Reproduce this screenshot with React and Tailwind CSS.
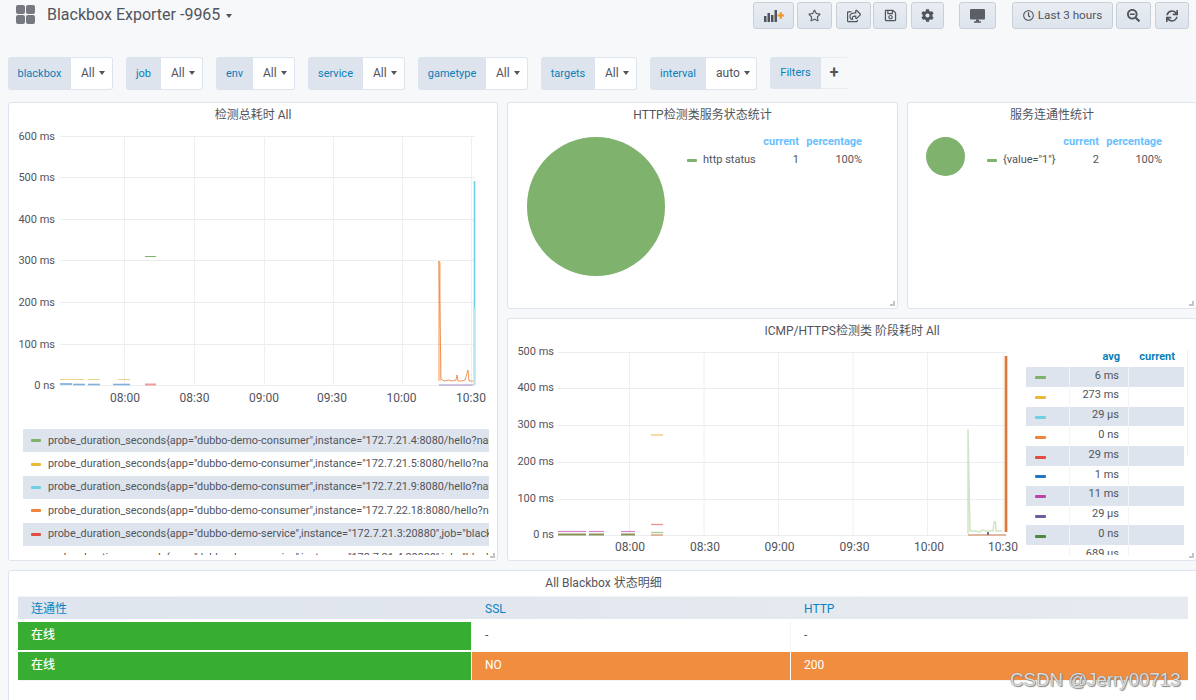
import React from "react";
import { FaRegStar, FaRegShareSquare, FaRegSave, FaCog, FaRegClock, FaSearchMinus, FaSync } from "react-icons/fa";

const Caret = ({ c = "" }) => (
  <span className={"inline-block w-0 h-0 border-x-[3.5px] border-t-[4px] border-x-transparent border-t-[#52545c] " + c} />
);

const btn = "h-[27px] flex items-center justify-center rounded-[3px] border border-[#c7d0d9] bg-gradient-to-b from-[#e9edf2] to-[#dde4ed] text-[#52545c]";

const vars = [
  ["blackbox", "All", "w-[63px]", "w-[42px]"],
  ["job", "All", "w-[35px]", "w-[42px]"],
  ["env", "All", "w-[37px]", "w-[42px]"],
  ["service", "All", "w-[55px]", "w-[42px]"],
  ["gametype", "All", "w-[68px]", "w-[42px]"],
  ["targets", "All", "w-[54px]", "w-[42px]"],
  ["interval", "auto", "w-[56px]", "w-[51px]"],
];

function Panel({ className = "", title, children, handle = true }) {
  return (
    <div className={"relative overflow-hidden bg-white border border-[#dde4ed] rounded-[3px] shrink-0 " + className}>
      <div className="h-[22px] pt-[2px] flex items-center justify-center text-[12px] font-normal text-[#52545c] whitespace-nowrap">{title}</div>
      {children}
      {handle && <span className="absolute right-[2px] bottom-[2px] w-[5px] h-[5px] border-r-2 border-b-2 border-[#c4c4c4]" />}
    </div>
  );
}

function Grid({ ys, xs, x0, x1, y0, y1, labels, times, tx, ty, lx, ly }) {
  return (
    <g>
      {ys.map((y) => <line key={y} x1={x0} x2={x1} y1={y} y2={y} stroke="#ecedef" strokeWidth="1" />)}
      {xs.map((x) => <line key={x} x1={x} x2={x} y1={y0} y2={y1} stroke="#eff0f2" strokeWidth="1" />)}
      {ys.map((y, i) => (
        <text key={y} x={lx} y={y + ly} textAnchor="end" fontSize="11" fill="#52545c">{labels[i]}</text>
      ))}
      {xs.map((x, i) => (
        <text key={x} x={tx[i]} y={ty} textAnchor="middle" fontSize="12" fill="#52545c">{times[i]}</text>
      ))}
    </g>
  );
}

const Seg = ({ x1, x2, y, c, w = 1, o = 1 }) => <line x1={x1} x2={x2} y1={y} y2={y} stroke={c} strokeWidth={w} opacity={o} />;

function Chart1() {
  const ys = [136.5, 177.5, 219.5, 260.5, 302.5, 344.5, 385.5];
  const xs = [124.5, 194.5, 264.5, 333.5, 402.5, 471.5];
  return (
    <svg width="488" height="294" viewBox="9 125 488 294" className="block">
      <Grid ys={ys} xs={xs} x0={60} x1={475} y0={136} y1={385.5} ly={3}
        labels={["600 ms", "500 ms", "400 ms", "300 ms", "200 ms", "100 ms", "0 ns"]}
        times={["08:00", "08:30", "09:00", "09:30", "10:00", "10:30"]}
        tx={[125, 194.5, 264, 332, 401.5, 471]} ty={402} lx={55} />
      <rect x="145" y="256" width="11" height="1" fill="#7eb26d" />
      {[[60, 73], [73, 84], [88, 100], [118, 130]].map(([a, b]) => <Seg key={a} x1={a} x2={b} y={379.5} c="#eab839" o={0.6} />)}
      <Seg x1={60} x2={72} y={384} c="#1f78c1" />
      {[[73, 85], [88, 100], [113, 130]].map(([a, b]) => <Seg key={a} x1={a} x2={b} y={384.5} c="#6ea6d6" w={1.6} o={0.85} />)}
      <Seg x1={145} x2={156} y={384.5} c="#f09a9a" w={2} />
      <line x1="440.5" x2="440.5" y1="262" y2="381" stroke="#fbd3b8" strokeWidth="1" />
      <polyline fill="none" stroke="#ef843c" strokeWidth="1" opacity="0.85"
        points="439,381 439,261 441,379 444,381 449,380 452,381 456,380 457,375 458,381 462,381 465,380 468,370 469,381 473,381" />
      <Seg x1={439} x2={473} y={385} c="#a58ac8" />
      <line x1="474.5" x2="474.5" y1="308" y2="385" stroke="#b7e6ee" strokeWidth="2.5" />
      <line x1="474.5" x2="474.5" y1="181" y2="308" stroke="#6ed0e0" strokeWidth="1.6" />
    </svg>
  );
}

function Chart2() {
  const ys = [352.5, 388.5, 425.5, 462.5, 499.5, 535.5];
  const xs = [629.5, 704, 778.5, 853, 927.5, 1003];
  const dash = [[558, 586], [589, 604], [621, 635]];
  return (
    <svg width="518" height="215" viewBox="508 341 518 215" className="block shrink-0">
      <Grid ys={ys} xs={xs} x0={558} x1={1007} y0={352.5} y1={535.5} ly={2.6}
        labels={["500 ms", "400 ms", "300 ms", "200 ms", "100 ms", "0 ns"]}
        times={["08:00", "08:30", "09:00", "09:30", "10:00", "10:30"]}
        tx={[630, 705, 779.5, 854.5, 929, 1003]} ty={551} lx={554} />
      {dash.map(([a, b]) => <g key={a}>
        <Seg x1={a} x2={b} y={531.5} c="#d683ce" w={1.2} />
        <Seg x1={a} x2={b} y={534.5} c="#6a7a2a" w={2} o={0.8} />
      </g>)}
      <Seg x1={651} x2={663} y={435} c="#f2cf8e" w={1.3} />
      <Seg x1={651} x2={663} y={524.5} c="#f29191" w={1.3} />
      <Seg x1={651} x2={663} y={532.5} c="#a8c89c" w={1.3} />
      <Seg x1={651} x2={663} y={535} c="#d29a70" w={1.3} />
      <polyline fill="none" stroke="#cfe5c6" strokeWidth="1.5"
        points="968,534 968,429 970,531 975,531 980,532 982,530 986,531 990,531 993,531 994,522 995.5,522 996,531 1002,531" />
      <Seg x1={968} x2={1006} y={535} c="#d9a382" w={1.4} />
      <rect x="987" y="532" width="2" height="3" fill="#7a6a9c" />
      <line x1="1006" x2="1006" y1="356" y2="532" stroke="#f2bb94" strokeWidth="3.4" />
      <line x1="1006" x2="1006" y1="356" y2="532" stroke="#d9793d" strokeWidth="2" />
    </svg>
  );
}

const legend1 = [
  ["#7eb26d", 'probe_duration_seconds{app="dubbo-demo-consumer",instance="172.7.21.4:8080/hello?name=blackbox",job="blackbox"}'],
  ["#eab839", 'probe_duration_seconds{app="dubbo-demo-consumer",instance="172.7.21.5:8080/hello?name=blackbox",job="blackbox"}'],
  ["#6ed0e0", 'probe_duration_seconds{app="dubbo-demo-consumer",instance="172.7.21.9:8080/hello?name=blackbox",job="blackbox"}'],
  ["#ef843c", 'probe_duration_seconds{app="dubbo-demo-consumer",instance="172.7.22.18:8080/hello?name=blackbox",job="blackbox"}'],
  ["#e24d42", 'probe_duration_seconds{app="dubbo-demo-service",instance="172.7.21.3:20880",job="blackbox"}'],
  ["#1f78c1", 'probe_duration_seconds{app="dubbo-demo-service",instance="172.7.21.4:20880",job="blackbox"}'],
];

const legend2 = [
  ["#7eb26d", "6 ms"], ["#eab839", "273 ms"], ["#6ed0e0", "29 µs"], ["#ef843c", "0 ns"], ["#e24d42", "29 ms"],
  ["#1f78c1", "1 ms"], ["#ba43a9", "11 ms"], ["#705da0", "29 µs"], ["#508642", "0 ns"], ["#cca300", "689 µs"],
];

function PieLegend({ name, value, className }) {
  return (
    <div className={"grid grid-cols-[10px_1fr_auto_63px] items-center text-[11px] text-[#52545c] " + className}>
      <span />
      <span />
      <span className="text-right font-bold text-[#69c0ff] h-[18px]">current</span>
      <span className="text-right font-bold text-[#69c0ff] h-[18px]">percentage</span>
      <span className="w-[10px] h-[3px] bg-[#7eb26d] rounded-[1px]" />
      <span className="pl-[6px] whitespace-nowrap">{name}</span>
      <span className="text-right">{value}</span>
      <span className="text-right">100%</span>
    </div>
  );
}

export default function App() {
  return (
    <div className="relative w-[1196px] h-[700px] overflow-hidden bg-[#f7f8fa] font-['Roboto','Noto_Sans_CJK_SC',sans-serif] text-[#52545c]">
      {/* top bar */}
      <div className="h-[57px] flex items-start">
        <div className="mt-[5px] ml-[16px] w-[19px] h-[19px] grid grid-cols-2 gap-[1px] shrink-0">
          <span className="bg-[#767980] rounded-[2px]" /><span className="bg-[#767980] rounded-[2px]" />
          <span className="bg-[#767980] rounded-[2px]" /><span className="bg-[#767980] rounded-[2px]" />
        </div>
        <div className="ml-[12px] mt-[3px] h-[24px] flex items-center text-[16px] whitespace-nowrap text-[#52545c]">
          Blackbox Exporter -9965
          <Caret c="ml-[6px] mt-[2px]" />
        </div>
        <div className="ml-auto mr-[7px] mt-[2px] flex items-start">
          <button className={btn + " w-[41px]"}>
            <svg width="20" height="12" viewBox="0 0 20 12">
              <rect x="0" y="6" width="2.5" height="6" fill="#52545c" />
              <rect x="3.5" y="3" width="2.5" height="9" fill="#52545c" />
              <rect x="7" y="5" width="2.5" height="7" fill="#52545c" />
              <rect x="10.5" y="0" width="2.5" height="12" fill="#52545c" />
              <path d="M13.5 4.5h2.2V2.3h2.1v2.2H20v2.1h-2.2v2.2h-2.1V6.6h-2.2z" fill="#f79520" />
            </svg>
          </button>
          <button className={btn + " w-[35px] ml-[3px]"}><FaRegStar size={13} /></button>
          <button className={btn + " w-[35px] ml-[4px]"}><FaRegShareSquare size={14} /></button>
          <button className={btn + " w-[34px] ml-[2px]"}><FaRegSave size={13} /></button>
          <button className={btn + " w-[33px] ml-[4px]"}><FaCog size={13} /></button>
          <button className={btn + " w-[37px] ml-[15px]"}>
            <svg width="15" height="14" viewBox="0 0 15 14">
              <rect x="0" y="0" width="15" height="10.5" rx="1" fill="#5d5f67" />
              <rect x="6" y="10.5" width="3" height="2" fill="#52545c" />
              <rect x="4" y="12.3" width="7" height="1.5" rx="0.5" fill="#52545c" />
            </svg>
          </button>
          <button className={btn + " w-[101px] ml-[16px] text-[11.7px] gap-[4px]"}><FaRegClock size={11} />Last 3 hours</button>
          <button className={btn + " w-[35px] ml-[3px]"}><FaSearchMinus size={13} /></button>
          <button className={btn + " w-[34px] ml-[4px]"}><FaSync size={12} /></button>
        </div>
      </div>

      {/* variables */}
      <div className="h-[33px] ml-[8px] flex gap-[13px] items-start text-[12px]">
        {vars.map(([k, v, lw, vw]) => (
          <div key={k} className="h-[33px] flex">
            <div className={"pt-[1px] flex items-center justify-center rounded-l-[3px] bg-[#dde4ed] text-[11px] font-normal text-[#0a7fb8] " + lw}>{k}</div>
            <div className={"pl-[10px] pb-[1px] flex items-center gap-[4px] rounded-r-[3px] bg-white border border-l-0 border-[#dde4ed] text-[#52545c] " + vw}>
              {v}<Caret />
            </div>
          </div>
        ))}
        <div className="h-[32px] flex">
          <div className="w-[51px] flex items-center justify-center rounded-l-[3px] bg-[#dde4ed] text-[11px] font-normal text-[#0a7fb8]">Filters</div>
          <div className="w-[26px] flex items-center justify-center border border-l-0 border-r-0 border-[#e9edf2] bg-[#f7f8fa] text-[#52545c] text-[16px] font-bold leading-none">+</div>
        </div>
      </div>

      {/* panels */}
      <div className="mt-[12px] ml-[8px] flex gap-[9px]">
        <Panel className="w-[490px] h-[459px]" title="检测总耗时 All">
          <Chart1 />
          <div className="mt-[10px] ml-[14px] w-[466px] h-[126px] overflow-hidden text-[10.85px] text-[#52545c]">
            {legend1.map(([c, t], i) => (
              <div key={i} className={"h-[23.4px] flex items-center whitespace-nowrap overflow-hidden " + (i % 2 === 0 ? "bg-[#dde4ed]" : "")}>
                <span className="ml-[8px] w-[10px] h-[3px] rounded-[1px] shrink-0" style={{ backgroundColor: c }} />
                <span className="ml-[7px]">{t}</span>
              </div>
            ))}
          </div>
        </Panel>

        <div className="flex flex-col gap-[9px]">
          <div className="flex gap-[9px]">
            <Panel className="w-[391px] h-[207px]" title="HTTP检测类服务状态统计">
              <div className="flex items-start">
                <div className="ml-[19px] mt-[12px] w-[138px] h-[139px] rounded-full bg-[#7eb26d] shrink-0" />
                <PieLegend className="ml-[22px] mt-[9px] w-[175px]" name="http status" value="1" />
              </div>
            </Panel>
            <Panel className="w-[290px] h-[207px]" title="服务连通性统计">
              <div className="flex items-start">
                <div className="ml-[18px] mt-[12px] w-[39px] h-[39px] rounded-full bg-[#7eb26d] shrink-0" />
                <PieLegend className="ml-[22px] mt-[9px] w-[175px]" name='{value="1"}' value="2" />
              </div>
            </Panel>
          </div>
          <Panel className="w-[690px] h-[243px]" title="ICMP/HTTPS检测类 阶段耗时 All">
            <div className="flex items-start">
              <Chart2 />
              <div className="relative w-[158px] h-[214px] overflow-hidden pt-[6px] text-[11px]">
                <div className="grid grid-cols-[44px_59px_55px] h-[20px] pt-[1px] items-center font-bold text-[11px] text-[#0a7fb8]">
                  <span />
                  <span className="text-right pr-[9px]">avg</span>
                  <span className="text-right pr-[9px]">current</span>
                </div>
                {legend2.map(([c, v], i) => (
                  <div key={i} className={"grid grid-cols-[44px_59px_55px] h-[19.8px] items-center " + (i % 2 === 0 ? "bg-[#dde4ed]" : "")}>
                    <span className="h-full flex items-center border-r border-[#f2f4f7]">
                      <span className="ml-[9px] mt-[2px] w-[11px] h-[3px] rounded-[1px]" style={{ backgroundColor: c }} />
                    </span>
                    <span className="h-full pb-[2px] flex items-center justify-end pr-[9px] border-r border-[#f2f4f7]">{v}</span>
                    <span />
                  </div>
                ))}
              </div>
              <span className="ml-[3px] mt-[9px] w-px h-[105px] bg-[#eef0f3]" />
            </div>
          </Panel>
        </div>
      </div>

      {/* table */}
      <div className="mt-[9px] ml-[8px]">
        <Panel className="w-[1191px] h-[140px]" title="All Blackbox 状态明细" handle={false}>
          <div className="mt-[3px] ml-[9px] w-[1170px] border-t border-b border-[#f3f4f6] text-[12px]">
            <div className="grid grid-cols-[454px_319px_397px] h-[22px] pt-[1px] items-center bg-gradient-to-r from-[#dfe5ee] to-[#e7eaf0] text-[#0a84c1]">
              <span className="pl-[13px]">连通性</span>
              <span className="pl-[13px]">SSL</span>
              <span className="pl-[13px]">HTTP</span>
            </div>
            <div className="mt-[3px] grid grid-cols-[454px_319px_397px] h-[28px]">
              <span className="flex items-center pl-[13px] pb-[2px] mr-px bg-[#37ae32] text-white font-medium">在线</span>
              <span className="flex items-center pl-[13px] pb-[2px] text-[#52545c] border-r border-[#f3f4f6]">-</span>
              <span className="flex items-center pl-[13px] pb-[2px] text-[#52545c]">-</span>
            </div>
            <div className="mt-[2px] grid grid-cols-[454px_319px_397px] h-[28px] text-white">
              <span className="flex items-center pl-[13px] pb-[2px] bg-[#37ae32] border-r border-white font-medium">在线</span>
              <span className="flex items-center pl-[13px] pb-[2px] bg-[#f08d3f] border-r border-white">NO</span>
              <span className="flex items-center pl-[13px] pb-[2px] bg-[#f08d3f]">200</span>
            </div>
          </div>
        </Panel>
      </div>

      <div className="absolute left-[1010px] top-[668px] text-[18.7px] leading-[24px] whitespace-nowrap font-['Liberation_Sans',sans-serif] text-[#dcdcdc] [text-shadow:0_0_1px_#666,1px_1px_1px_#888]">
        CSDN @Jerry00713
      </div>
    </div>
  );
}
